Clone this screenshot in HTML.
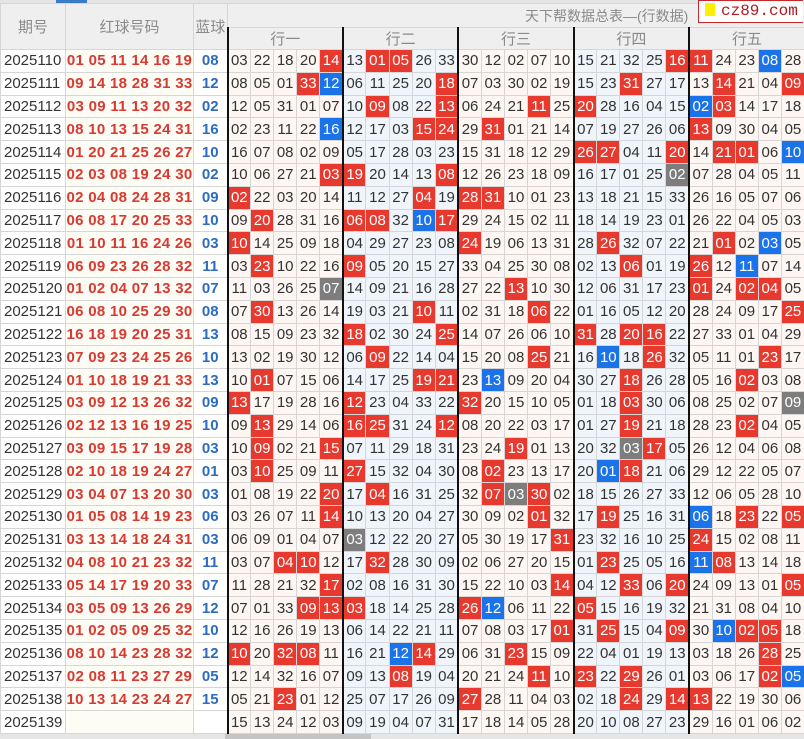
<!DOCTYPE html>
<html><head><meta charset="utf-8">
<style>
html,body{margin:0;padding:0;width:804px;height:739px;overflow:hidden;background:#fff;font-family:"Liberation Sans","Noto Sans CJK SC",sans-serif}
.top{position:absolute;left:0;top:0;width:804px;height:3px;background:#e4e4e4}
.top i{position:absolute;left:56px;top:0;width:31px;height:3px;background:#3a7bc8}
table{position:absolute;left:0;top:3px;border-collapse:collapse;table-layout:fixed;width:804px}
td,th{border:1px solid #d6d6d6;padding:0;text-align:center;white-space:nowrap;overflow:hidden;font-size:15px;color:#333;font-weight:normal}
th{background:#efefef;color:#8a8a8a;font-size:15px}
tr.h1 th{height:23px}
tr.h2 th{height:21px}
tbody tr{height:22.8px}
td.q{text-align:left;padding-left:3px;background:#fff;color:#333}
td.rb{background:#fdfcf5;color:#d83a31;font-weight:bold;letter-spacing:0.3px}
td.bb{color:#2b6cc0;font-weight:bold;background:#fff}
tbody td:nth-child(4),tbody td:nth-child(9),tbody td:nth-child(14),tbody td:nth-child(19),tbody td:nth-child(24),tr.h2 th.g{border-left:2px solid #111}
col.a{background:#fdf6f3}
col.b{background:#eff5fb}
td.r{background:#e8392f;color:#fff}
td.b{background:#1a73e8;color:#fff}
td.g{background:#7d7d7d;color:#fff}
.logo{position:absolute;left:698px;top:0;width:104px;height:21px;border:1px solid #c9262b;border-right:none;background:#fff;font-family:"Liberation Mono",monospace;font-size:16px;color:#b01a22;line-height:21px}
.logo span{display:inline-block;width:10px;height:13px;background:#ffef00;margin:0 6px 0 6px;vertical-align:-1px}
.sb{position:absolute;left:0;top:734px;width:804px;height:5px;background:#e6e6e6}
.sb i{position:absolute;left:225px;top:0;width:146px;height:5px;background:#c4c4c4}
</style></head><body>
<div class="top"><i></i></div>
<table>
<colgroup><col style="width:65px"><col style="width:128px"><col style="width:34px">
<col class=a span=5 style="width:23.08px"><col class=b span=5 style="width:23.08px"><col class=a span=5 style="width:23.08px"><col class=b span=5 style="width:23.08px"><col class=a span=5 style="width:23.08px"></colgroup>
<thead>
<tr class=h1><th rowspan=2>期号</th><th rowspan=2>红球号码</th><th rowspan=2>蓝球</th><th colspan=25 style="text-align:left;padding-left:297px;font-size:14px">天下帮数据总表—(行数据)</th></tr>
<tr class=h2><th colspan=5 class=g>行一</th><th colspan=5 class=g>行二</th><th colspan=5 class=g>行三</th><th colspan=5 class=g>行四</th><th colspan=5 class=g>行五</th></tr>
</thead>
<tbody>
<tr><td class=q>2025110</td><td class=rb>01 05 11 14 16 19</td><td class=bb>08</td><td>03</td><td>22</td><td>18</td><td>20</td><td class=r>14</td><td>13</td><td class=r>01</td><td class=r>05</td><td>26</td><td>33</td><td>30</td><td>12</td><td>02</td><td>07</td><td>10</td><td>15</td><td>21</td><td>32</td><td>25</td><td class=r>16</td><td class=r>11</td><td>24</td><td>23</td><td class=b>08</td><td>28</td></tr>
<tr><td class=q>2025111</td><td class=rb>09 14 18 28 31 33</td><td class=bb>12</td><td>08</td><td>05</td><td>01</td><td class=r>33</td><td class=b>12</td><td>06</td><td>11</td><td>25</td><td>20</td><td class=r>18</td><td>07</td><td>03</td><td>30</td><td>02</td><td>19</td><td>15</td><td>23</td><td class=r>31</td><td>27</td><td>17</td><td>13</td><td class=r>14</td><td>21</td><td>04</td><td class=r>09</td></tr>
<tr><td class=q>2025112</td><td class=rb>03 09 11 13 20 32</td><td class=bb>02</td><td>12</td><td>05</td><td>31</td><td>01</td><td>07</td><td>10</td><td class=r>09</td><td>08</td><td>22</td><td class=r>13</td><td>06</td><td>24</td><td>21</td><td class=r>11</td><td>25</td><td class=r>20</td><td>28</td><td>16</td><td>04</td><td>15</td><td class=b>02</td><td class=r>03</td><td>14</td><td>17</td><td>18</td></tr>
<tr><td class=q>2025113</td><td class=rb>08 10 13 15 24 31</td><td class=bb>16</td><td>02</td><td>23</td><td>11</td><td>22</td><td class=b>16</td><td>12</td><td>17</td><td>03</td><td class=r>15</td><td class=r>24</td><td>29</td><td class=r>31</td><td>01</td><td>21</td><td>14</td><td>07</td><td>19</td><td>27</td><td>26</td><td>06</td><td class=r>13</td><td>09</td><td>30</td><td>04</td><td>05</td></tr>
<tr><td class=q>2025114</td><td class=rb>01 20 21 25 26 27</td><td class=bb>10</td><td>16</td><td>07</td><td>08</td><td>02</td><td>09</td><td>05</td><td>17</td><td>28</td><td>03</td><td>23</td><td>15</td><td>31</td><td>18</td><td>12</td><td>29</td><td class=r>26</td><td class=r>27</td><td>04</td><td>11</td><td class=r>20</td><td>14</td><td class=r>21</td><td class=r>01</td><td>06</td><td class=b>10</td></tr>
<tr><td class=q>2025115</td><td class=rb>02 03 08 19 24 30</td><td class=bb>02</td><td>10</td><td>06</td><td>27</td><td>21</td><td class=r>03</td><td class=r>19</td><td>20</td><td>14</td><td>13</td><td class=r>08</td><td>12</td><td>26</td><td>23</td><td>18</td><td>09</td><td>16</td><td>17</td><td>01</td><td>25</td><td class=g>02</td><td>07</td><td>28</td><td>04</td><td>05</td><td>11</td></tr>
<tr><td class=q>2025116</td><td class=rb>02 04 08 24 28 31</td><td class=bb>09</td><td class=r>02</td><td>22</td><td>03</td><td>20</td><td>14</td><td>11</td><td>12</td><td>27</td><td class=r>04</td><td>19</td><td class=r>28</td><td class=r>31</td><td>10</td><td>01</td><td>23</td><td>13</td><td>18</td><td>21</td><td>15</td><td>33</td><td>26</td><td>16</td><td>05</td><td>07</td><td>06</td></tr>
<tr><td class=q>2025117</td><td class=rb>06 08 17 20 25 33</td><td class=bb>10</td><td>09</td><td class=r>20</td><td>28</td><td>31</td><td>16</td><td class=r>06</td><td class=r>08</td><td>32</td><td class=b>10</td><td class=r>17</td><td>29</td><td>24</td><td>15</td><td>02</td><td>11</td><td>18</td><td>14</td><td>19</td><td>23</td><td>01</td><td>26</td><td>22</td><td>04</td><td>05</td><td>03</td></tr>
<tr><td class=q>2025118</td><td class=rb>01 10 11 16 24 26</td><td class=bb>03</td><td class=r>10</td><td>14</td><td>25</td><td>09</td><td>18</td><td>04</td><td>29</td><td>27</td><td>23</td><td>08</td><td class=r>24</td><td>19</td><td>06</td><td>13</td><td>31</td><td>28</td><td class=r>26</td><td>32</td><td>07</td><td>22</td><td>21</td><td class=r>01</td><td>02</td><td class=b>03</td><td>05</td></tr>
<tr><td class=q>2025119</td><td class=rb>06 09 23 26 28 32</td><td class=bb>11</td><td>03</td><td class=r>23</td><td>10</td><td>22</td><td>16</td><td class=r>09</td><td>05</td><td>20</td><td>15</td><td>27</td><td>33</td><td>04</td><td>25</td><td>30</td><td>08</td><td>02</td><td>13</td><td class=r>06</td><td>01</td><td>19</td><td class=r>26</td><td>12</td><td class=b>11</td><td>07</td><td>14</td></tr>
<tr><td class=q>2025120</td><td class=rb>01 02 04 07 13 32</td><td class=bb>07</td><td>11</td><td>03</td><td>26</td><td>25</td><td class=g>07</td><td>14</td><td>09</td><td>21</td><td>16</td><td>28</td><td>27</td><td>22</td><td class=r>13</td><td>10</td><td>30</td><td>12</td><td>06</td><td>31</td><td>17</td><td>23</td><td class=r>01</td><td>24</td><td class=r>02</td><td class=r>04</td><td>05</td></tr>
<tr><td class=q>2025121</td><td class=rb>06 08 10 25 29 30</td><td class=bb>08</td><td>07</td><td class=r>30</td><td>13</td><td>26</td><td>14</td><td>19</td><td>03</td><td>21</td><td class=r>10</td><td>11</td><td>02</td><td>31</td><td>18</td><td class=r>06</td><td>22</td><td>01</td><td>16</td><td>05</td><td>12</td><td>20</td><td>28</td><td>24</td><td>09</td><td>17</td><td class=r>25</td></tr>
<tr><td class=q>2025122</td><td class=rb>16 18 19 20 25 31</td><td class=bb>13</td><td>08</td><td>15</td><td>09</td><td>23</td><td>32</td><td class=r>18</td><td>02</td><td>30</td><td>24</td><td class=r>25</td><td>14</td><td>07</td><td>26</td><td>06</td><td>10</td><td class=r>31</td><td>28</td><td class=r>20</td><td class=r>16</td><td>22</td><td>27</td><td>33</td><td>01</td><td>04</td><td>29</td></tr>
<tr><td class=q>2025123</td><td class=rb>07 09 23 24 25 26</td><td class=bb>10</td><td>13</td><td>02</td><td>19</td><td>30</td><td>12</td><td>06</td><td class=r>09</td><td>22</td><td>14</td><td>04</td><td>15</td><td>20</td><td>08</td><td class=r>25</td><td>21</td><td>16</td><td class=b>10</td><td>18</td><td class=r>26</td><td>32</td><td>05</td><td>11</td><td>01</td><td class=r>23</td><td>17</td></tr>
<tr><td class=q>2025124</td><td class=rb>01 10 18 19 21 33</td><td class=bb>13</td><td>10</td><td class=r>01</td><td>07</td><td>15</td><td>06</td><td>14</td><td>17</td><td>25</td><td class=r>19</td><td class=r>21</td><td>23</td><td class=b>13</td><td>09</td><td>20</td><td>04</td><td>30</td><td>27</td><td class=r>18</td><td>26</td><td>28</td><td>05</td><td>16</td><td class=r>02</td><td>03</td><td>08</td></tr>
<tr><td class=q>2025125</td><td class=rb>03 09 12 13 26 32</td><td class=bb>09</td><td class=r>13</td><td>17</td><td>19</td><td>28</td><td>16</td><td class=r>12</td><td>23</td><td>04</td><td>33</td><td>22</td><td class=r>32</td><td>20</td><td>15</td><td>10</td><td>05</td><td>01</td><td>18</td><td class=r>03</td><td>30</td><td>06</td><td>08</td><td>25</td><td>02</td><td>07</td><td class=g>09</td></tr>
<tr><td class=q>2025126</td><td class=rb>02 12 13 16 19 25</td><td class=bb>10</td><td>09</td><td class=r>13</td><td>29</td><td>14</td><td>06</td><td class=r>16</td><td class=r>25</td><td>31</td><td>24</td><td class=r>12</td><td>08</td><td>20</td><td>22</td><td>03</td><td>17</td><td>01</td><td>27</td><td class=r>19</td><td>21</td><td>18</td><td>28</td><td>23</td><td class=r>02</td><td>04</td><td>05</td></tr>
<tr><td class=q>2025127</td><td class=rb>03 09 15 17 19 28</td><td class=bb>03</td><td>10</td><td class=r>09</td><td>02</td><td>21</td><td class=r>15</td><td>07</td><td>11</td><td>29</td><td>18</td><td>31</td><td>23</td><td>24</td><td class=r>19</td><td>01</td><td>13</td><td>20</td><td>32</td><td class=g>03</td><td class=r>17</td><td>05</td><td>26</td><td>12</td><td>04</td><td>06</td><td>08</td></tr>
<tr><td class=q>2025128</td><td class=rb>02 10 18 19 24 27</td><td class=bb>01</td><td>03</td><td class=r>10</td><td>25</td><td>09</td><td>11</td><td class=r>27</td><td>15</td><td>32</td><td>04</td><td>30</td><td>08</td><td class=r>02</td><td>23</td><td>13</td><td>17</td><td>20</td><td class=b>01</td><td class=r>18</td><td>21</td><td>06</td><td>29</td><td>12</td><td>22</td><td>05</td><td>07</td></tr>
<tr><td class=q>2025129</td><td class=rb>03 04 07 13 20 30</td><td class=bb>03</td><td>01</td><td>08</td><td>19</td><td>22</td><td class=r>20</td><td>17</td><td class=r>04</td><td>16</td><td>31</td><td>25</td><td>32</td><td class=r>07</td><td class=g>03</td><td class=r>30</td><td>02</td><td>18</td><td>15</td><td>26</td><td>27</td><td>33</td><td>12</td><td>06</td><td>05</td><td>28</td><td>10</td></tr>
<tr><td class=q>2025130</td><td class=rb>01 05 08 14 19 23</td><td class=bb>06</td><td>03</td><td>26</td><td>07</td><td>11</td><td class=r>14</td><td>10</td><td>13</td><td>20</td><td>04</td><td>27</td><td>30</td><td>09</td><td>02</td><td class=r>01</td><td>32</td><td>17</td><td class=r>19</td><td>25</td><td>16</td><td>31</td><td class=b>06</td><td>18</td><td class=r>23</td><td>22</td><td class=r>05</td></tr>
<tr><td class=q>2025131</td><td class=rb>03 13 14 18 24 31</td><td class=bb>03</td><td>06</td><td>09</td><td>01</td><td>04</td><td>07</td><td class=g>03</td><td>12</td><td>22</td><td>20</td><td>27</td><td>05</td><td>30</td><td>19</td><td>17</td><td class=r>31</td><td>23</td><td>32</td><td>16</td><td>10</td><td>25</td><td class=r>24</td><td>15</td><td>02</td><td>08</td><td>11</td></tr>
<tr><td class=q>2025132</td><td class=rb>04 08 10 21 23 32</td><td class=bb>11</td><td>03</td><td>07</td><td class=r>04</td><td class=r>10</td><td>12</td><td>17</td><td class=r>32</td><td>28</td><td>30</td><td>09</td><td>02</td><td>06</td><td>27</td><td>20</td><td>15</td><td>01</td><td class=r>23</td><td>25</td><td>05</td><td>16</td><td class=b>11</td><td class=r>08</td><td>13</td><td>14</td><td>18</td></tr>
<tr><td class=q>2025133</td><td class=rb>05 14 17 19 20 33</td><td class=bb>07</td><td>11</td><td>28</td><td>21</td><td>32</td><td class=r>17</td><td>02</td><td>08</td><td>16</td><td>31</td><td>30</td><td>15</td><td>22</td><td>10</td><td>03</td><td class=r>14</td><td>04</td><td>12</td><td class=r>33</td><td>06</td><td class=r>20</td><td>24</td><td>09</td><td>13</td><td>01</td><td class=r>05</td></tr>
<tr><td class=q>2025134</td><td class=rb>03 05 09 13 26 29</td><td class=bb>12</td><td>07</td><td>01</td><td>33</td><td class=r>09</td><td class=r>13</td><td class=r>03</td><td>18</td><td>14</td><td>25</td><td>28</td><td class=r>26</td><td class=b>12</td><td>06</td><td>11</td><td>22</td><td class=r>05</td><td>15</td><td>16</td><td>19</td><td>32</td><td>21</td><td>31</td><td>08</td><td>04</td><td>10</td></tr>
<tr><td class=q>2025135</td><td class=rb>01 02 05 09 25 32</td><td class=bb>10</td><td>12</td><td>16</td><td>26</td><td>19</td><td>13</td><td>06</td><td>14</td><td>22</td><td>21</td><td>11</td><td>07</td><td>08</td><td>03</td><td>17</td><td class=r>01</td><td>31</td><td class=r>25</td><td>15</td><td>04</td><td class=r>09</td><td>30</td><td class=b>10</td><td class=r>02</td><td class=r>05</td><td>18</td></tr>
<tr><td class=q>2025136</td><td class=rb>08 10 14 23 28 32</td><td class=bb>12</td><td class=r>10</td><td>20</td><td class=r>32</td><td class=r>08</td><td>11</td><td>16</td><td>21</td><td class=b>12</td><td class=r>14</td><td>29</td><td>06</td><td>31</td><td class=r>23</td><td>15</td><td>09</td><td>22</td><td>04</td><td>01</td><td>19</td><td>13</td><td>03</td><td>18</td><td>26</td><td class=r>28</td><td>25</td></tr>
<tr><td class=q>2025137</td><td class=rb>02 08 11 23 27 29</td><td class=bb>05</td><td>12</td><td>14</td><td>32</td><td>16</td><td>07</td><td>09</td><td>13</td><td class=r>08</td><td>19</td><td>04</td><td>20</td><td>21</td><td>24</td><td class=r>11</td><td>10</td><td class=r>23</td><td>22</td><td class=r>29</td><td>26</td><td>01</td><td>03</td><td>06</td><td>17</td><td class=r>02</td><td class=b>05</td></tr>
<tr><td class=q>2025138</td><td class=rb>10 13 14 23 24 27</td><td class=bb>15</td><td>05</td><td>21</td><td class=r>23</td><td>01</td><td>12</td><td>25</td><td>07</td><td>17</td><td>26</td><td>09</td><td class=r>27</td><td>28</td><td>11</td><td>04</td><td>03</td><td>02</td><td>18</td><td class=r>24</td><td>29</td><td class=r>14</td><td class=r>13</td><td>22</td><td>19</td><td>30</td><td>06</td></tr>
<tr><td class=q>2025139</td><td class=rb></td><td class=bb></td><td>15</td><td>13</td><td>24</td><td>12</td><td>03</td><td>09</td><td>19</td><td>04</td><td>07</td><td>31</td><td>17</td><td>18</td><td>14</td><td>05</td><td>28</td><td>20</td><td>10</td><td>08</td><td>27</td><td>23</td><td>29</td><td>16</td><td>01</td><td>06</td><td>02</td></tr>
</tbody></table>
<div class="logo"><span></span>cz89.com</div>
<div class="sb"><i></i></div>
</body></html>
